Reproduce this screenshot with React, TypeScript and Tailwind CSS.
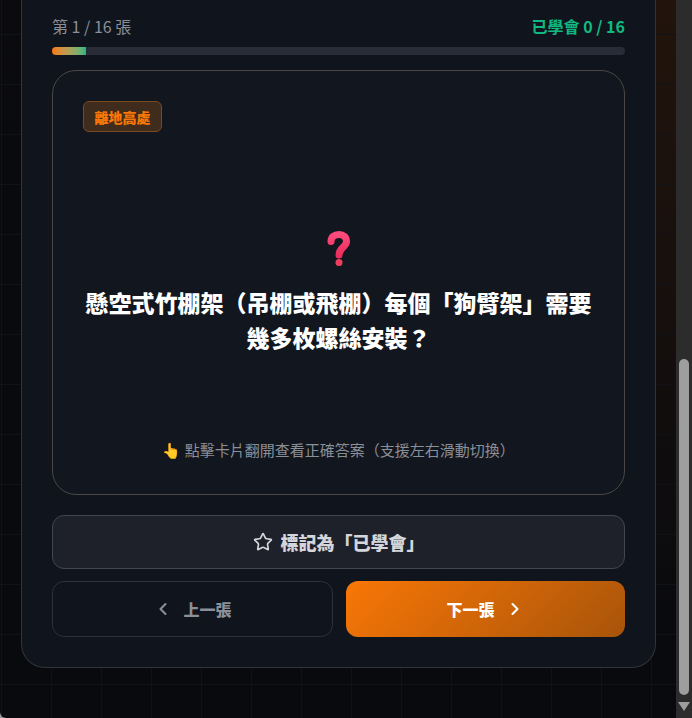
import { Star, ChevronLeft, ChevronRight } from 'lucide-react';

function QuestionMark() {
  return (
    <svg className="mx-auto block" width="24" height="36" viewBox="0 0 24 36">
      <defs>
        <linearGradient id="qm" x1="0" y1="0" x2="0" y2="1">
          <stop offset="0" stopColor="#fd4a7c" />
          <stop offset="1" stopColor="#ec2f5c" />
        </linearGradient>
      </defs>
      <path
        d="M4 10.500C4 6 7.500 3.500 12 3.500S19.500 6 19.500 10.500C19.500 16 12 16.500 12 24"
        fill="none"
        stroke="url(#qm)"
        strokeWidth="7"
        strokeLinecap="round"
      />
      <circle cx="12" cy="31.500" r="3.500" fill="#ee3f5c" />
    </svg>
  );
}

export default function App() {
  return (
    <div className="flex h-[718px] w-[692px] overflow-hidden bg-[#9a9a9a] font-['Noto_Sans_CJK_TC',sans-serif]">
      {/* Page */}
      <div className="h-full w-[676px] rounded-bl-md bg-[#090a0e] bg-[linear-gradient(#101218_1px,transparent_1px),linear-gradient(90deg,#101218_1px,transparent_1px),radial-gradient(ellipse_700px_620px_at_100%_0%,#22140c,transparent)] bg-[size:50px_50px,50px_50px,100%_100%] bg-[position:1px_34px,1px_34px,0_0]">
        <div className="ml-[21px] flex h-[668px] w-[635px] flex-col rounded-b-[24px] border-x border-b border-[#33343a] bg-[#10141c] px-[30px] pt-[16px]">
          {/* Progress */}
          <div className="flex h-5 items-center justify-between">
            <span className="text-base text-[#8b8f98]">第 1 / 16 張</span>
            <span className="text-base font-bold text-[#10b981]">已學會 0 / 16</span>
          </div>
          <div className="mt-[11px] h-2 w-full overflow-hidden rounded-full bg-[#282c36]">
            <div className="h-full w-[34px] bg-gradient-to-r from-[#f97706] to-[#10b981]" />
          </div>

          {/* Flash card */}
          <div className="mt-[15px] flex h-[425px] flex-col rounded-[24px] border border-[#4a4744] bg-[#12161e] px-[30px] pt-[30px]">
            <span className="flex h-[31px] w-[79px] items-center justify-center rounded-md border border-[#7a4a1e] bg-[#3f2c1c] text-sm font-black text-[#f97706]">
              離地高處
            </span>
            <div className="mt-[99px]">
              <QuestionMark />
            </div>
            <h2 className="mt-[18px] text-center text-[23px] font-black leading-[35px] text-white">
              懸空式竹棚架（吊棚或飛棚）每個「狗臂架」需要
              <br />
              幾多枚螺絲安裝？
            </h2>
            <p className="mt-[84px] text-center text-[15px] text-[#8b8f98]">👆 點擊卡片翻開查看正確答案（支援左右滑動切換）</p>
          </div>

          {/* Actions */}
          <button className="mt-5 flex h-[54px] w-full items-center justify-center gap-2 rounded-xl border border-[#434650] bg-[#1e212a] text-lg font-black text-[#d4d6dc]">
            <Star size={20} />
            標記為「已學會」
          </button>
          <div className="mt-3 flex justify-between">
            <button className="flex h-[56px] w-[281px] items-center justify-center gap-[10px] rounded-xl border border-[#2f3138] text-base font-black text-[#8b8f98]">
              <ChevronLeft size={20} strokeWidth={2.5} />
              上一張
            </button>
            <button className="flex h-[56px] w-[279px] items-center justify-center gap-[10px] rounded-xl bg-[linear-gradient(135deg,#f97706,#a8540a)] text-base font-black text-white">
              下一張
              <ChevronRight size={20} strokeWidth={2.5} />
            </button>
          </div>
        </div>
      </div>

      {/* Scrollbar */}
      <div className="flex h-full w-4 flex-col items-center bg-[#2c2c2c]">
        <div className="mt-[359px] h-[336px] w-[10px] rounded-full bg-[#9e9e9e]" />
        <svg className="mt-[7px]" width="12" height="10" viewBox="0 0 12 10">
          <path d="M0 0h12L6 9z" fill="#9e9e9e" />
        </svg>
      </div>
    </div>
  );
}
